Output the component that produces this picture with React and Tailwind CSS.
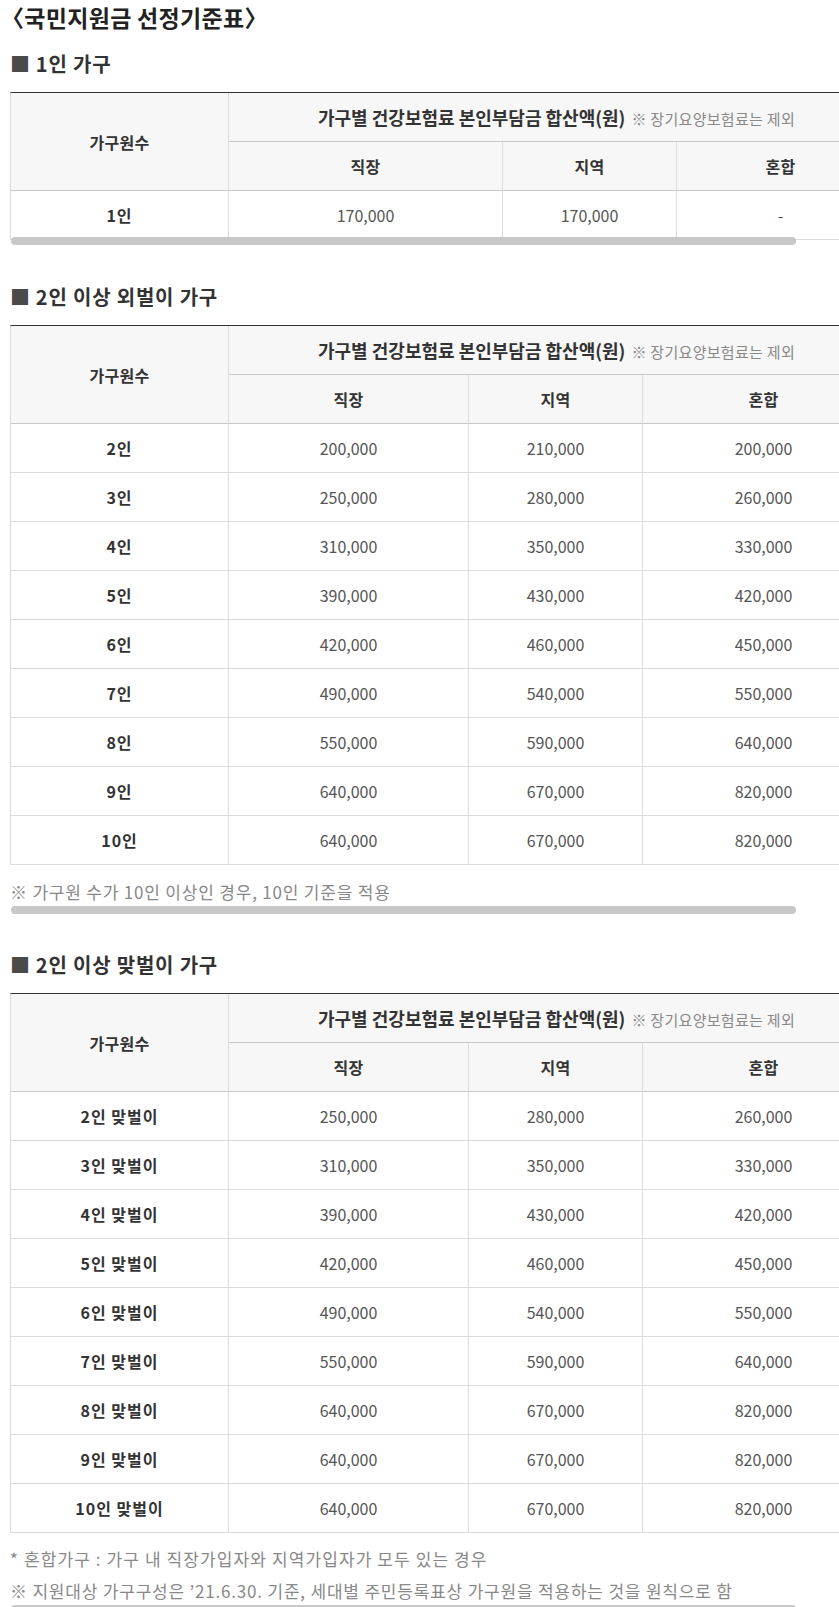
import React from "react";

const table2 = [
  ["2인", "200,000", "210,000", "200,000"],
  ["3인", "250,000", "280,000", "260,000"],
  ["4인", "310,000", "350,000", "330,000"],
  ["5인", "390,000", "430,000", "420,000"],
  ["6인", "420,000", "460,000", "450,000"],
  ["7인", "490,000", "540,000", "550,000"],
  ["8인", "550,000", "590,000", "640,000"],
  ["9인", "640,000", "670,000", "820,000"],
  ["10인", "640,000", "670,000", "820,000"],
];

const table3 = [
  ["2인 맞벌이", "250,000", "280,000", "260,000"],
  ["3인 맞벌이", "310,000", "350,000", "330,000"],
  ["4인 맞벌이", "390,000", "430,000", "420,000"],
  ["5인 맞벌이", "420,000", "460,000", "450,000"],
  ["6인 맞벌이", "490,000", "540,000", "550,000"],
  ["7인 맞벌이", "550,000", "590,000", "640,000"],
  ["8인 맞벌이", "640,000", "670,000", "820,000"],
  ["9인 맞벌이", "640,000", "670,000", "820,000"],
  ["10인 맞벌이", "640,000", "670,000", "820,000"],
];

function Heading({ children }) {
  return (
    <div className="h-[28px] flex items-center text-[20px] tracking-[0.8px] font-bold text-[#333]">
      <span className="text-[#4a4a4a]">■</span>
      <span className="ml-[5px]">{children}</span>
    </div>
  );
}

function Thumb() {
  return (
    <div className="relative ml-[1px] h-[8px] w-[785px] rounded-full bg-[#c8c8c8]" />
  );
}

function DataTable({ rows, widths }) {
  return (
    <table className="border-separate border-spacing-0 border-t border-l border-t-[#333] border-l-[#dcdcdc] w-[873px] table-fixed">
      <colgroup>
        {widths.map((w, i) => (
          <col key={i} style={{ width: w }} />
        ))}
      </colgroup>
      <thead>
        <tr>
          <th
            rowSpan={2}
            className="bg-[#f7f7f7] border-r border-b border-r-[#dcdcdc] border-b-[#c8c8c8] text-[16px] tracking-[0.3px] font-bold text-[#333] p-0"
          >
            가구원수
          </th>
          <th
            colSpan={3}
            className="h-[49px] bg-[#f7f7f7] border-b border-b-[#c8c8c8] p-0 font-normal"
          >
            <span className="text-[18px] font-bold text-[#333]">
              가구별 건강보험료 본인부담금 합산액(원)
            </span>
            <span className="ml-[6px] text-[15px] tracking-[0.3px] text-[#888]">
              ※ 장기요양보험료는 제외
            </span>
          </th>
        </tr>
        <tr>
          <th className="h-[49px] bg-[#f7f7f7] border-r border-b border-r-[#dcdcdc] border-b-[#c8c8c8] text-[16px] tracking-[0.3px] font-bold text-[#333] p-0">
            직장
          </th>
          <th className="h-[49px] bg-[#f7f7f7] border-r border-b border-r-[#dcdcdc] border-b-[#c8c8c8] text-[16px] tracking-[0.3px] font-bold text-[#333] p-0">
            지역
          </th>
          <th className="h-[49px] bg-[#f7f7f7] border-b border-b-[#c8c8c8] text-[16px] tracking-[0.3px] font-bold text-[#333] p-0">
            혼합
          </th>
        </tr>
      </thead>
      <tbody>
        {rows.map((r, i) => (
          <tr key={i}>
            <td className="h-[49px] border-r border-b border-[#dcdcdc] text-center text-[16px] tracking-[1px] font-bold text-[#333] p-0">
              {r[0]}
            </td>
            <td className="h-[49px] border-r border-b border-[#dcdcdc] text-center text-[16px] text-[#555] p-0">
              {r[1]}
            </td>
            <td className="h-[49px] border-r border-b border-[#dcdcdc] text-center text-[16px] text-[#555] p-0">
              {r[2]}
            </td>
            <td className="h-[49px] border-b border-[#dcdcdc] text-center text-[16px] text-[#555] p-0">
              {r[3]}
            </td>
          </tr>
        ))}
      </tbody>
    </table>
  );
}

export default function App() {
  return (
    <div className="bg-white min-h-[1607px] font-['Noto_Sans_CJK_KR',sans-serif] overflow-hidden">
      <div className="h-[35px] pl-[1px] flex items-center text-[23px] tracking-[0.3px] font-bold text-[#222]">
        〈국민지원금 선정기준표〉
      </div>

      <div className="pl-[10px]">
        <div className="mt-[15px]">
          <Heading>1인 가구</Heading>
        </div>
        <div className="mt-[14px] overflow-hidden">
          <DataTable
            rows={[["1인", "170,000", "170,000", "-"]]}
            widths={[218, 274, 174, 207]}
          />
          <div className="-mt-[3px]">
            <Thumb />
          </div>
        </div>

        <div className="mt-[38px]">
          <Heading>2인 이상 외벌이 가구</Heading>
        </div>
        <div className="mt-[14px] overflow-hidden">
          <DataTable rows={table2} widths={[218, 240, 174, 241]} />
          <p className="mt-[11px] text-[17px] tracking-[0.8px] leading-[32px] text-[#888] whitespace-nowrap">
            ※ 가구원 수가 10인 이상인 경우, 10인 기준을 적용
          </p>
          <div className="-mt-[2px]">
            <Thumb />
          </div>
        </div>

        <div className="mt-[37px]">
          <Heading>2인 이상 맞벌이 가구</Heading>
        </div>
        <div className="mt-[14px] overflow-hidden">
          <DataTable rows={table3} widths={[218, 240, 174, 241]} />
          <p className="mt-[10px] text-[17px] tracking-[1.1px] leading-[32px] text-[#888] whitespace-nowrap">
            * 혼합가구 : 가구 내 직장가입자와 지역가입자가 모두 있는 경우
          </p>
          <p className="text-[17px] tracking-[0.8px] leading-[32px] text-[#888] whitespace-nowrap">
            ※ 지원대상 가구구성은 ’21.6.30. 기준, 세대별 주민등록표상 가구원을 적용하는 것을 원칙으로 함
          </p>
          <div className="-mt-[2px]">
            <Thumb />
          </div>
        </div>
      </div>
    </div>
  );
}
